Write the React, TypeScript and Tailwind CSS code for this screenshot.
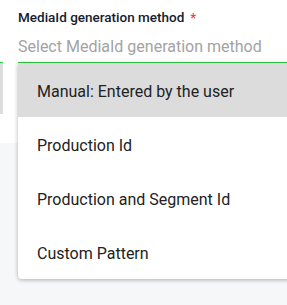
import React from "react";

const options = [
  "Manual: Entered by the user",
  "Production Id",
  "Production and Segment Id",
  "Custom Pattern",
];

export default function App() {
  return (
    <div className="relative w-[287px] h-[305px] overflow-hidden bg-[#f6f7f9] font-['Roboto',sans-serif]">
      {/* Form area behind the menu */}
      <div className="flex h-[143px] bg-white">
        <div className="w-[3px] pt-[62px]">
          <div className="h-[1px] bg-[#2ecc40]" />
          <div className="h-[51px] bg-[#dcdcdc]" />
        </div>

        <div className="flex-1 pl-[15px] pt-[8px]">
          <div className="flex items-center gap-[6px] text-[13.5px] font-medium leading-[18px] text-[#161b2e]">
            <span>MediaId generation method</span>
            <span className="text-[#ef4444]">*</span>
          </div>

          <div className="mt-[11px] text-[16px] leading-[20px] text-[#a3a3a3] whitespace-nowrap">
            Select MediaId generation method
          </div>

          <div className="mt-[5px] h-[1px] bg-[#2ecc40]" />
        </div>
      </div>

      {/* Open dropdown menu */}
      <div className="absolute left-[18px] top-[63px] w-[290px] rounded-bl-[4px] bg-white shadow-[0_1px_4px_rgba(0,0,0,0.3)]">
        {options.map((opt, i) => (
          <div
            key={opt}
            className={
              i === 0
                ? "h-[54px] flex items-center pl-[19px] pt-[3px] text-[16px] text-[#222] bg-[#dcdcdc]"
                : "h-[54px] flex items-center pl-[19px] pt-[3px] text-[16px] text-[#222]"
            }
          >
            {opt}
          </div>
        ))}
      </div>
    </div>
  );
}
